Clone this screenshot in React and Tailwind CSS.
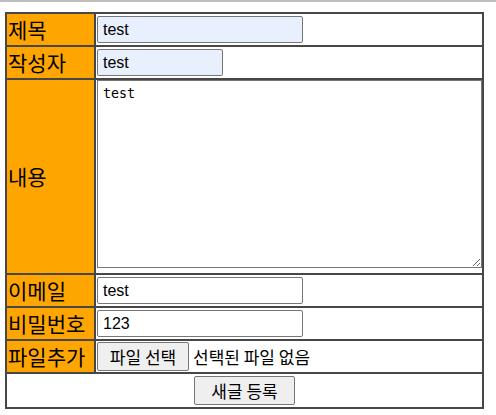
import { useState } from "react";

function Row({ label, children, last }) {
	return (
		<div
			className={`grid grid-cols-[89px_386px] h-[33px] ${last ? "" : "border-b-2 border-[#474747]"}`}
		>
			<div className="bg-[#ffa500] border-r-2 border-[#474747] flex items-center pl-px text-[21px] leading-none text-black font-['Noto_Sans_CJK_KR',sans-serif]">
				{label}
			</div>
			<div className="pl-px flex items-end pb-[2px]">{children}</div>
		</div>
	);
}

function App() {
	const [title, setTitle] = useState("test");
	const [writer, setWriter] = useState("test");
	const [content, setContent] = useState("test");
	const [email, setEmail] = useState("test");
	const [pw, setPw] = useState("123");

	const inputCls =
		"h-[27px] border border-[#767676] rounded-[2px] px-[5px] text-[16px] text-black outline-none font-['Liberation_Sans',Arial,sans-serif]";
	const btnCls =
		"h-[29px] bg-[#efefef] border border-[#767676] rounded-[2px] text-[17px] leading-none text-black font-['Noto_Sans_CJK_KR',sans-serif]";

	return (
		<div className="w-[496px] h-[415px] bg-white overflow-hidden">
			<div className="h-[2px] bg-[#bdbdbd]" />

			<div className="ml-[5px] mt-[10px] w-[479px] border-2 border-[#474747]">
				<Row label="제목">
					<input
						className={`${inputCls} w-[206px] bg-[#e8f0fe]`}
						value={title}
						onChange={(e) => setTitle(e.target.value)}
					/>
				</Row>
				<Row label="작성자">
					<input
						className={`${inputCls} w-[126px] bg-[#e8f0fe]`}
						value={writer}
						onChange={(e) => setWriter(e.target.value)}
					/>
				</Row>

				{/* 내용 */}
				<div className="grid grid-cols-[89px_386px] h-[195px] border-b-2 border-[#474747]">
					<div className="bg-[#ffa500] border-r-2 border-[#474747] flex items-center pl-px text-[21px] leading-none text-black font-['Noto_Sans_CJK_KR',sans-serif]">
						내용
					</div>
					<div className="pl-px">
						<textarea
							className="block w-[385px] h-[188px] border border-[#767676] p-[5px] text-[13.33px] leading-[16px] text-black outline-none font-['DejaVu_Sans_Mono','Liberation_Mono',monospace]"
							value={content}
							onChange={(e) => setContent(e.target.value)}
						/>
					</div>
				</div>

				<Row label="이메일">
					<input
						className={`${inputCls} w-[206px] bg-white`}
						value={email}
						onChange={(e) => setEmail(e.target.value)}
					/>
				</Row>
				<Row label="비밀번호">
					<input
						className={`${inputCls} w-[206px] bg-white`}
						value={pw}
						onChange={(e) => setPw(e.target.value)}
					/>
				</Row>
				<Row label="파일추가">
					<div className="flex items-center gap-[4px] mb-[-1px]">
						<button className={`${btnCls} w-[92px]`}>파일 선택</button>
						<span className="text-[17px] leading-none text-black font-['Noto_Sans_CJK_KR',sans-serif]">
							선택된 파일 없음
						</span>
					</div>
				</Row>
				<div className="h-[33px] flex items-center justify-center">
					<button className={`${btnCls} w-[101px]`}>새글 등록</button>
				</div>
			</div>
		</div>
	);
}

export default App;
